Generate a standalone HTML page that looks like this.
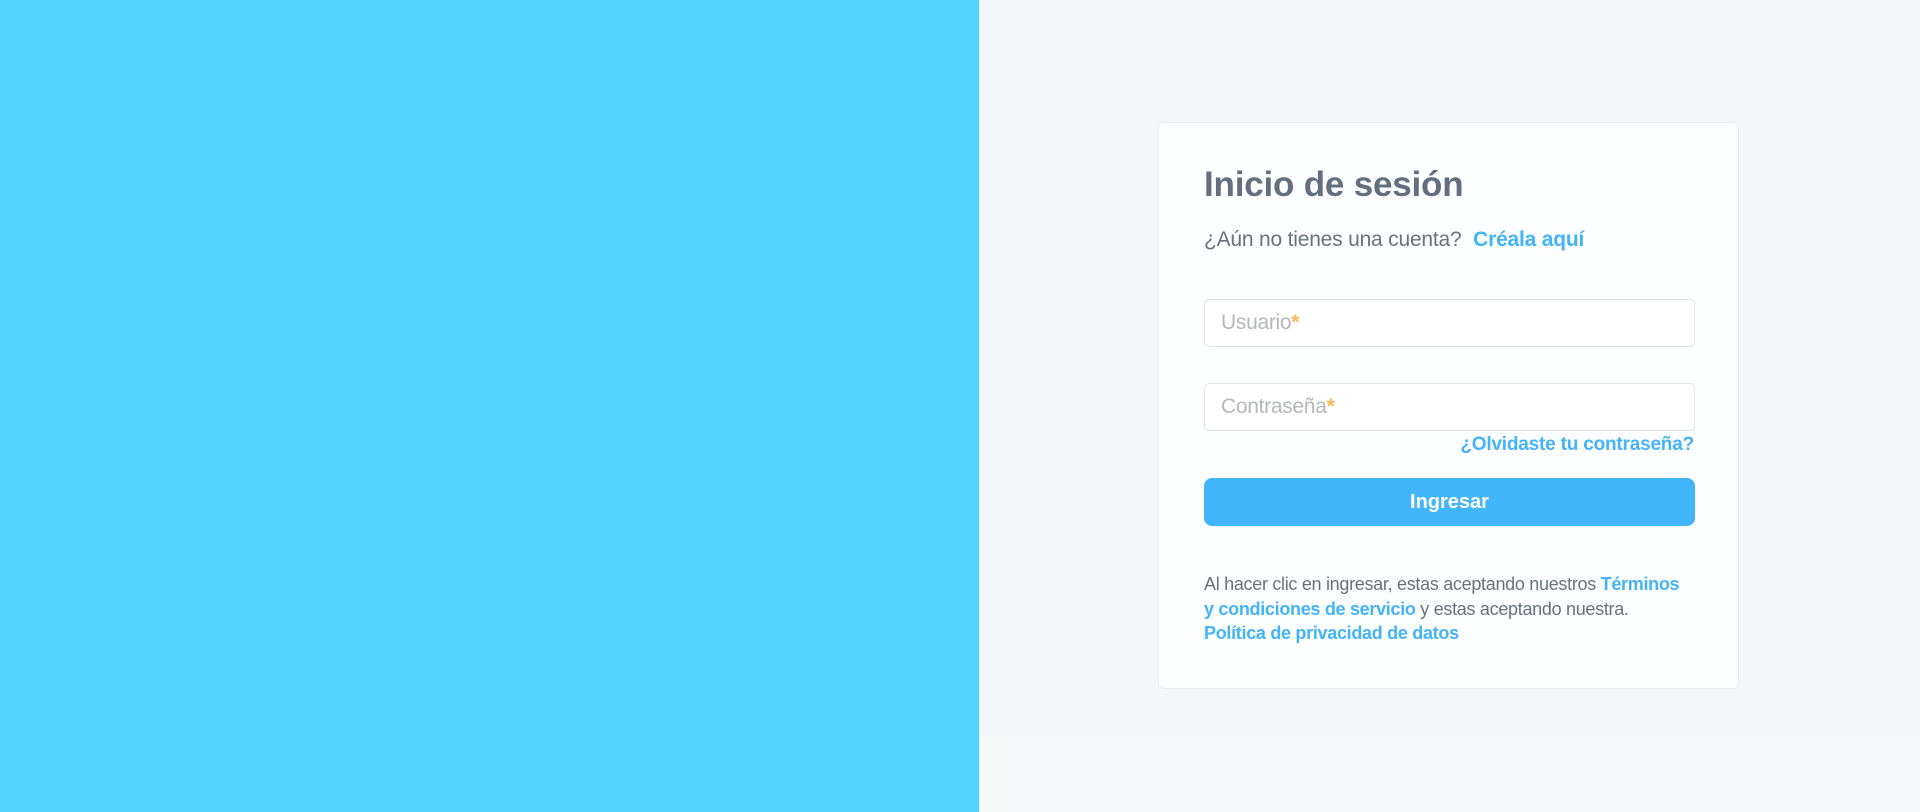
<!DOCTYPE html>
<html><head><meta charset="utf-8"><style>
*{box-sizing:border-box;margin:0;padding:0}
body{width:1920px;height:812px;overflow:hidden;font-family:"Liberation Sans",sans-serif;background:#f5f8f9;position:relative}
.left{position:absolute;left:0;top:0;width:979px;height:812px;background:#50d4ff}
.top{position:absolute;left:979px;top:0;right:0;height:735px;background:#f3f6f8}
.card{position:absolute;left:1158px;top:122px;width:581px;height:567px;background:#fdfeff;border:1px solid #e8ecef;border-radius:6px}
h1{position:absolute;left:45px;top:42px;font-size:35px;font-weight:bold;color:#646e7e;letter-spacing:-0.2px}
.sub{position:absolute;left:45px;top:105px;font-size:21px;color:#6b717c;letter-spacing:-0.2px}
.sub b{color:#43b4fb;margin-left:6px}
.in{position:absolute;left:45px;width:491px;height:48px;border:1px solid #dfe2e6;border-radius:5px;background:#fff;font-size:21px;color:#b5b7ba;padding:11px 16px;letter-spacing:-0.3px}
.in span{color:#ffb55a;font-weight:bold}
.fg{position:absolute;right:44px;top:311px;font-size:19px;font-weight:bold;color:#43b4fb;letter-spacing:-0.2px}
.btn{position:absolute;left:45px;top:355px;width:491px;height:48px;border-radius:8px;background:#42b6fc;color:#fff;font-weight:bold;font-size:20px;text-align:center;line-height:48px}
.terms{position:absolute;left:45px;top:449px;width:500px;font-size:18px;line-height:24.5px;color:#6b717c;letter-spacing:-0.3px}
.terms b{color:#43b4fb}
</style></head><body>
<div class="left"></div><div class="top"></div>
<div class="card">
<h1>Inicio de sesión</h1>
<div class="sub">¿Aún no tienes una cuenta? <b>Créala aquí</b></div>
<div class="in" style="top:176px">Usuario<span>*</span></div>
<div class="in" style="top:260px">Contraseña<span>*</span></div>
<div class="fg">¿Olvidaste tu contraseña?</div>
<div class="btn">Ingresar</div>
<div class="terms">Al hacer clic en ingresar, estas aceptando nuestros <b>Términos<br>y condiciones de servicio</b> y estas aceptando nuestra.<br><b>Política de privacidad de datos</b></div>
</div>
</body></html>
